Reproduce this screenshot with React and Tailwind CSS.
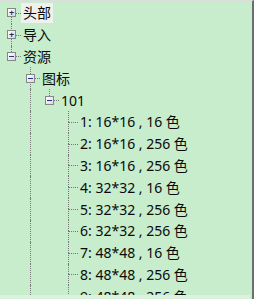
import React from "react";

const leaves = [
  "1: 16*16 , 16 色",
  "2: 16*16 , 256 色",
  "3: 16*16 , 256 色",
  "4: 32*32 , 16 色",
  "5: 32*32 , 256 色",
  "6: 32*32 , 256 色",
  "7: 48*48 , 16 色",
  "8: 48*48 , 256 色",
  "9: 48*48 , 256 色",
  "10: 16*16 , 32 位",
  "11: 32*32 , 32 位",
].map((label) => ({ label }));

const tree = [
  { label: "头部", children: [], open: false, selected: true },
  { label: "导入", children: [], open: false },
  {
    label: "资源",
    open: true,
    children: [
      {
        label: "图标",
        open: true,
        children: [{ label: "101", open: true, children: leaves }],
      },
      { label: "光标", children: [], open: false },
    ],
  },
];

// dotted tree connectors sit behind the expand boxes
const line = "absolute border-dotted border-[#777]";

function ExpandBox({ open }) {
  return (
    <span className="relative z-10 w-[9px] h-[9px] border border-[#878787] bg-gradient-to-br from-white to-[#d8d8d8] flex items-center justify-center">
      {open ? (
        <span className="w-[5px] h-[1px] bg-[#23378a]" />
      ) : (
        <span className="text-[#1c2c6e] text-[9px] leading-none font-bold">+</span>
      )}
    </span>
  );
}

function Row({ node, level, guides, first, last }) {
  const hasKids = node.children !== undefined;
  return (
    <div className="flex h-[21.8px] items-center">
      {guides.map((g, i) => (
        <div key={i} className="relative w-[19px] h-full shrink-0">
          {g && <span className={line + " left-[9px] top-0 bottom-0 border-l"} />}
        </div>
      ))}
      <div className="relative w-[19px] h-full shrink-0 flex items-center pl-[5px]">
        {!(level === 0 && first) && <span className={line + " left-[9px] top-0 h-1/2 border-l"} />}
        {!last && <span className={line + " left-[9px] top-1/2 bottom-0 border-l"} />}
        <span className={line + " left-[10px] right-0 top-1/2 border-t"} />
        {hasKids && <ExpandBox open={node.open} />}
      </div>
      <span
        className={
          "px-[2px] h-[20px] flex items-center whitespace-nowrap text-[#0a0a0a] " +
          (node.selected ? "bg-[#eff1ef]" : "")
        }
      >
        {node.label}
      </span>
    </div>
  );
}

function Branch({ nodes, level, guides }) {
  return nodes.map((node, i) => {
    const last = i === nodes.length - 1;
    return (
      <React.Fragment key={node.label}>
        <Row node={node} level={level} guides={guides} first={i === 0} last={last} />
        {node.open && node.children && node.children.length > 0 && (
          <Branch nodes={node.children} level={level + 1} guides={[...guides, !last]} />
        )}
      </React.Fragment>
    );
  });
}

export default function App() {
  return (
    <div className="w-[254px] h-[299px] overflow-hidden bg-[#c7edcc] border-t border-[#dcdcdc] border-r-2 border-r-[#6b6f6f] flex flex-col font-['Noto_Sans','Noto_Sans_CJK_SC',sans-serif] text-[14px]">
      <div className="flex-1 min-h-0 overflow-hidden pl-[2px] pt-[1px]">
        <Branch nodes={tree} level={0} guides={[]} />
      </div>
      <div className="h-[4px] shrink-0 mr-[2px] bg-[#dcf2de]" />
    </div>
  );
}
